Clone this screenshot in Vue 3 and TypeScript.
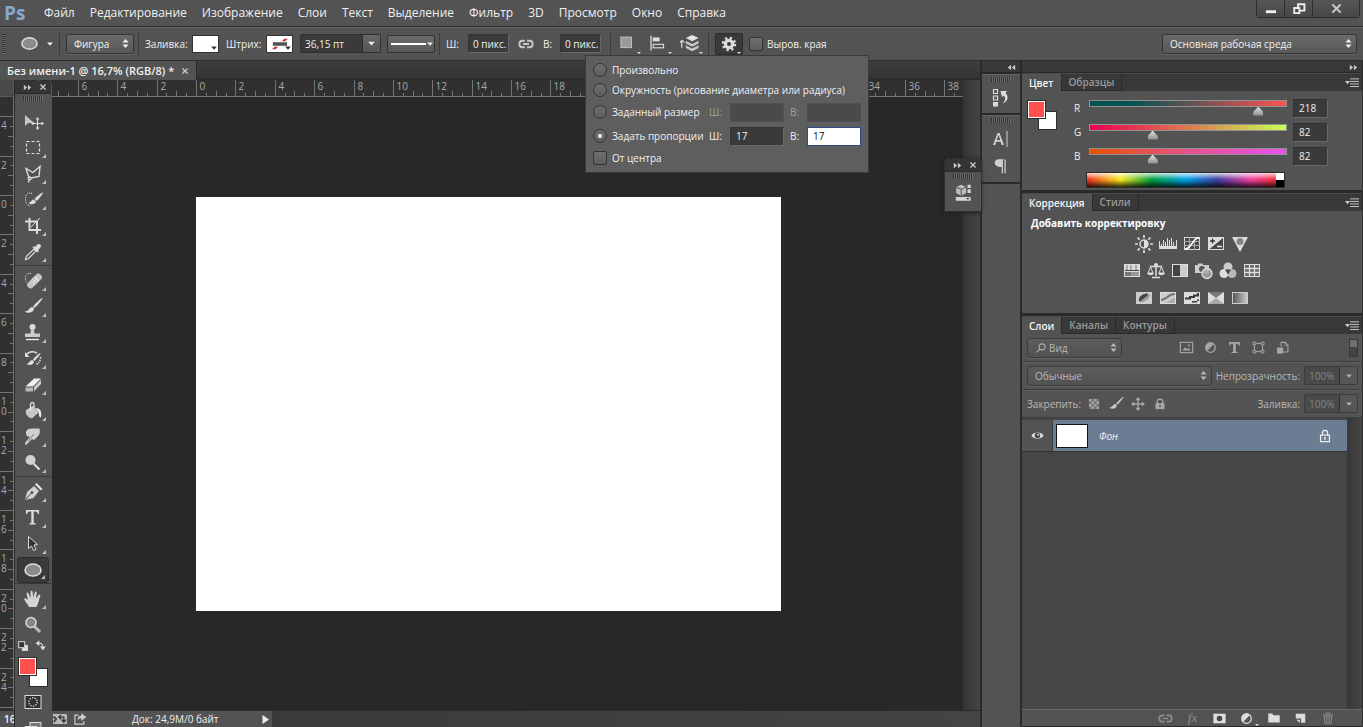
<script setup lang="ts">
import { h, ref } from 'vue'

const glyphs: Record<string, string> = {
  move: `<path d="M3 4v11l3-3h6z" fill="#c8c8c8"/><path d="M15.500 8v9M11 12.500h9" fill="none" stroke="#dcdcdc"/><path d="M15.500 6l2 2.500h-4zM15.500 19l2-2.500h-4zM9 12.500l2.500-2v4zM22 12.500l-2.500-2v4z" fill="#dcdcdc"/>`,
  marquee: `<rect x="4.500" y="4.500" width="13" height="12" fill="none" stroke="#e6e6e6" stroke-width="1.200" stroke-dasharray="3 2"/>`,
  lasso: `<path d="M7 15L4 5.500l7 4 7-6-1 10-8 1.500c-1.500-2-3.500-.5-2.500 1s3 .5 2.500-1M7.500 16l-1 3.500" fill="none" stroke="#dcdcdc" stroke-width="1.400"/>`,
  quick: `<path d="M10 4.500C5 2.500 3.500 6 3.500 10s1.500 7 5 6.500" fill="none" stroke="#eee" stroke-dasharray="1 1.200"/><path d="M20.500 3.500c-2 1-6 4-8 6.500l2 2c2.500-2 5.500-6 6.500-8z" fill="#dcdcdc"/><path d="M11.500 10.500c-2 0-2 2.500-5 3.500 2.500 2 7 1.500 7.500-1.500z" fill="#dcdcdc"/>`,
  crop: `<path d="M7.500 3v12H19M3 6.500h12V19" fill="none" stroke="#dcdcdc" stroke-width="2"/><path d="M18 3l-9 9" stroke="#dcdcdc"/>`,
  dropper: `<path d="M12 8l2 2-7.500 7.500-3 1 .8-3z" fill="none" stroke="#dcdcdc" stroke-width="1.200"/><path d="M10.500 6.500l5 5 1.500-1.500-1-1c1-1 3-2.500 3-4s-2-2.500-3.500-1.500L13 6l-1-1z" fill="#dcdcdc"/>`,
  heal: `<path d="M9 3.500c-4-.5-6 2-5.500 5.500.5 2 .5 3 1 4" fill="none" stroke="#eee" stroke-dasharray="1 1.200"/><rect x="3.500" y="7.500" width="18" height="7" rx="3.500" transform="rotate(-45 12.500 11)" fill="#c4c4c4"/><path d="M9 10.500l4-4 4 4-4.500 4.500z" fill="#e6e6e6"/><path d="M12 9h1M14 11h1M10.500 11h1M12.500 13h1" stroke="#555"/>`,
  brush: `<path d="M20 2c-2.500 1.500-7 6-9 8.500l1.500 1.500C15 10 19 5 20.500 2.500z" fill="#dcdcdc"/><path d="M10.500 11c-3-.5-3 4-8 4.500 3.500 2.500 9 1.500 9.500-3z" fill="#dcdcdc"/>`,
  stamp: `<circle cx="10.500" cy="5" r="3" fill="#dcdcdc"/><path d="M9 7h3l.5 4.500h5.500V15H3v-3.500h5.500z" fill="#ccc"/><path d="M4 17.500h13" stroke="#eee" stroke-width="1.300"/>`,
  history: `<path d="M4 7c3-4 7-4 11-2" fill="none" stroke="#dcdcdc" stroke-width="1.500"/><path d="M3 4v5h4.500z" fill="#dcdcdc"/><path d="M18 5c-2 1-5 4-7 6.500l1.500 1.500c2-2 5-5.500 6-7.500z" fill="#dcdcdc"/><path d="M10.500 12c-3 0-2.500 3-6 4 3 2 7.500 1 7.500-2.500z" fill="#dcdcdc"/><path d="M18.500 9c0 4-1.500 6-5 8" fill="none" stroke="#eee" stroke-width="1.500" stroke-dasharray="1.500 1"/>`,
  eraser: `<path d="M3.500 12.500L12 4.500h7l-8 8z" fill="#ededed"/><path d="M3.500 13.500h7.500v4H3.500z" fill="#b8b8b8"/><path d="M12 13l7-7.500V10l-7 7.500z" fill="#c8c8c8"/>`,
  bucket: `<path d="M4 10l7-4 5.500 6.500-6 5.500c-3 1.500-8-4-6.500-8z" fill="#c8c8c8"/><path d="M8.500 11V5c0-3.500 3.500-3.500 3.500 0v3" fill="none" stroke="#e6e6e6" stroke-width="1.300"/><path d="M13 8c5 0 7 3 6 9-2 1-2-2-2.500-5z" fill="#eee"/>`,
  smudge: `<path d="M4 6c1-3 3-3.500 7-3.500h6.500c1 4 0 7-3.500 9.500-1 2-3 2-4 1L4 19c-2-1-.5-3 1-4.500l3-4C5 11.500 3.500 9 4 6z" fill="#d0d0d0"/><path d="M12 8l-6 7" stroke="#777"/>`,
  dodge: `<circle cx="8.500" cy="8" r="5" fill="#d0d0d0"/><path d="M11.500 11.500l6 6" stroke="#dcdcdc" stroke-width="2.200"/>`,
  pen: `<path d="M3 19l2-8 7-6 5 5-5.500 7z" fill="#d0d0d0"/><path d="M13 3.500l1.500-1.500 6 6L19 9.500z" fill="#e6e6e6"/><path d="M3.500 18.500l6-6.500" stroke="#444"/><circle cx="10" cy="11.500" r="1.300" fill="#444"/>`,
  text: `<path d="M4 3h13v4h-1.300c-.2-1.800-.8-2.500-2.500-2.500h-1.500v10.500c0 1 .6 1.300 2 1.400v1H7.300v-1c1.400-.1 2-.4 2-1.400V4.500H7.800C6 4.500 5.500 5.200 5.300 7H4z" fill="#dcdcdc"/>`,
  select: `<path d="M6.500 3.500v12l3-2.500 2 4.500 2.500-1-2-4.500 3.500-.5z" fill="#303030" stroke="#dcdcdc"/>`,
  ellipse: `<ellipse cx="11" cy="11" rx="8" ry="6" fill="#8b8b8b" stroke="#e0e0e0" stroke-width="1.500"/>`,
  hand: `<path d="M7 19c-1-3-4-5-5-8 1-1.500 2.500-.5 4 1L4.500 5.500c0-1.500 1.800-1.500 2 0L8.500 10 8.500 4c0-1.700 2-1.700 2.200 0l.5 5.500 1.500-5c.5-1.500 2.300-1 2 .5l-.8 5.500L16.500 7c1-1.300 2.300-.2 1.800 1-1.300 3-1.800 8-4 11z" fill="#d4d4d4"/>`,
  zoom: `<path d="M12 12l6 6" stroke="#bdbdbd" stroke-width="3"/><circle cx="9" cy="8.500" r="5" fill="#858585" stroke="#dcdcdc" stroke-width="1.500"/>`,
  mask: `<rect x="3" y="4.500" width="16" height="13" fill="#333" stroke="#dcdcdc"/><circle cx="11" cy="11" r="4.200" fill="none" stroke="#eee" stroke-width="1.200" stroke-dasharray="1.300 1.300"/>`,
  screen: `<rect x="8" y="5.500" width="11" height="8" fill="#777" stroke="#dcdcdc"/><path d="M3 9.500h12V15H3z" fill="#999" stroke="#dcdcdc"/>`,
  reset: `<rect x="9" y="9" width="11" height="11" fill="#ddd"/><rect x="3" y="3" width="11" height="11" fill="#333" stroke="#ccc" stroke-width="2"/>`,
  swap: `<path d="M5 6.500c7-1.500 9 1 9.500 7" fill="none" stroke="#dcdcdc" stroke-width="2"/><path d="M8 1v10L1 6zM9 12h11l-5.500 7z" fill="#dcdcdc"/>`,
  link: `<path d="M9.500 6.500H6c-5.500 0-5.500 9 0 9h3.500M12.500 6.500H16c5.500 0 5.500 9 0 9h-3.500M7 11h8" fill="none" stroke="currentColor" stroke-width="2.500"/>`,
  combine: `<rect x="3.500" y="2.500" width="13" height="13" fill="#9a9a9a" stroke="#d0d0d0"/>`,
  align: `<path d="M3.500 2v17" stroke="#ddd" stroke-width="1.500"/><rect x="5.500" y="4" width="8" height="4.500" fill="#ddd"/><rect x="6" y="12" width="12" height="4" fill="#555" stroke="#ddd" stroke-width="1.300"/>`,
  stack: `<path d="M3 7v8M1 9.500L3.500 7 6 9.500" fill="none" stroke="#ddd" stroke-width="1.300"/><path d="M14.500 1l7 3.500-7 3.500-7-3.500z" fill="#e4e4e4"/><path d="M7.500 7.500l7 3.500 7-3.500v3l-7 3.500-7-3.500zM7.500 12.500l7 3.500 7-3.500v3L14.500 19l-7-3.500z" fill="#c8c8c8"/>`,
  gear: `<circle cx="11" cy="11" r="5" fill="none" stroke="#dcdcdc" stroke-width="4.500"/><circle cx="11" cy="11" r="8" fill="none" stroke="#dcdcdc" stroke-width="4" stroke-dasharray="3 3.283"/>`,
  historyPanel: `<path d="M3.500 2.500h4v4h-4zM3.500 9h4v4h-4z" fill="none" stroke="#dcdcdc" stroke-width="1.200"/><path d="M3 15h5v4.500H3z" fill="#dcdcdc"/><path d="M10.500 4H17l-1.500 2c4 4 2 9-3.500 11 3.500-3 4-6 1.800-8.500L12 10z" fill="#dcdcdc"/>`,
  glyphPanel: `<path d="M3 17L7.500 5h2L14 17h-2.400l-1-3.200H6.300L5.200 17zm3.800-5h3.400L8.500 6.800z" fill="#d0d0d0" fill-rule="evenodd"/><path d="M17 3v16" stroke="#d0d0d0"/>`,
  para: `<path d="M15.500 4v15M12.500 4v15" stroke="#d0d0d0" stroke-width="1.400"/><path d="M16 3.500H8c-6 1-5 8 2 8.500h2V4.500z" fill="#d0d0d0"/>`,
  cube: `<path d="M9 2l5.500 2.500v6.500L9 14l-5.500-3V4.500z" fill="#bdbdbd"/><path d="M3.500 4.500L9 7l5.500-2.500M9 7v7" fill="none" stroke="#444"/><path d="M16 2h3.500v3.500H16zM16 7h3.500v4H16zM3 15.500h16.500v4H3z" fill="#d4d4d4"/><path d="M14.500 16.500h3.500l-1.700 2z" fill="#333"/>`,
  sun: `<circle cx="11" cy="11" r="4" fill="#555" stroke="#ddd" stroke-width="1.500"/><path d="M11 7a4 4 0 010 8z" fill="#ddd"/><path d="M11 2v3M11 17v3M2 11h3M17 11h3M4.600 4.600l2.100 2.100M15.300 15.300l2.100 2.100M4.600 17.400l2.100-2.100M15.300 6.700l2.100-2.100" stroke="#ddd" stroke-width="1.700"/>`,
  levels: `<path d="M2 13h18v3H2z" fill="#ddd"/><path d="M2.500 8v6M4.500 11v3M6.500 7v7M8.500 9v5M10.500 5v9M12.500 7v7M14.500 5v9M16.500 9v5M19.500 7v7" stroke="#ddd"/>`,
  curves: `<rect x="3.500" y="4.500" width="15" height="12" fill="#4a4a4a" stroke="#ddd"/><path d="M8.500 4v13M13.500 4v13M3 8.500h16M3 12.500h16" stroke="#aaa"/><path d="M4 16c7 0 7-11 14-11" fill="none" stroke="#fff" stroke-width="1.500"/>`,
  exposure: `<rect x="3.500" y="4.500" width="15" height="12" fill="#444" stroke="#ddd"/><path d="M4 16.500V5h14z" fill="#ddd"/><path d="M5 8h5M7.500 5.500v5" stroke="#333" stroke-width="1.300"/><path d="M12 13.500h5" stroke="#eee" stroke-width="1.500"/>`,
  vibrance: `<path d="M3 4h16l-8 15z" fill="#ddd"/><circle cx="11" cy="8.500" r="3.500" fill="#858585"/>`,
  hue: `<rect x="3" y="4" width="16" height="13" fill="#ddd"/><path d="M4 10.500h14" stroke="#444"/><path d="M6 5v5M10 5v5M15 5v5" stroke="#aaa" stroke-width="2"/><path d="M4 12h14v4H4z" fill="#999"/><path d="M4 12h6v4H4z" fill="#777"/>`,
  balance: `<path d="M11 4v12M5 6.500h12M7 17.500h8" stroke="#ddd" stroke-width="1.500"/><circle cx="11" cy="5" r="2" fill="#ddd"/><path d="M5.500 7L3 13h5zM16.500 7L14 13h5z" fill="none" stroke="#ddd"/><path d="M2 13h7c-1 3-6 3-7 0zM13 13h7c-1 3-6 3-7 0z" fill="#ddd"/>`,
  bw: `<rect x="3.500" y="4.500" width="15" height="12" fill="#444" stroke="#ddd"/><path d="M11 5h7v11h-7z" fill="#ccc"/>`,
  photo: `<path d="M2 5h3V3.500h5V5h6v8H2z" fill="#ccc"/><circle cx="9" cy="9" r="3" fill="#555"/><circle cx="14" cy="13.500" r="5" fill="#aaa" fill-opacity=".8" stroke="#ddd" stroke-width="1.300"/>`,
  mixer: `<circle cx="11" cy="7" r="4.500" fill="#ccc"/><circle cx="7" cy="13.500" r="4.500" fill="#ddd"/><circle cx="15" cy="13.500" r="4.500" fill="#b8b8b8"/><path d="M8 9.500h6l-3 5z" fill="#444"/>`,
  table: `<rect x="3.500" y="4.500" width="15" height="12" fill="#666" stroke="#ddd"/><path d="M8.500 4v13M13.500 4v13M3 8.500h16M3 12.500h16" stroke="#ddd" stroke-width="1.300"/>`,
  invert: `<rect x="3" y="5" width="16" height="12" fill="#ccc"/><path d="M6 14c-1-5 4-7.500 9-7.500 0 5-3 9-8 8z" fill="#444"/><path d="M5 16L17 6.500c0 5-4 8-9 8z" fill="#999"/>`,
  poster: `<rect x="3.500" y="5.500" width="15" height="11" fill="#ccc" stroke="#ddd"/><path d="M4 12c5-1 7-5 12-6h2v2c-6 0-8 6-14 6z" fill="#777"/><path d="M8 16c4 0 6-5 10-5v5z" fill="#aaa"/>`,
  threshold: `<rect x="3" y="5" width="16" height="12" fill="#ddd"/><path d="M4 10.500h4V9h4V7.500h4V6h2v3.500h-4V11h-4v1.500H4zM7 15.500h4V14h5v-1.500h2V14h-2v1.500z" fill="#3a3a3a"/>`,
  selective: `<rect x="3" y="5" width="16" height="12" fill="#a8a8a8"/><path d="M3 5h16l-8 6z" fill="#777"/><path d="M3 5l8 6-8 6zM19 5l-8 6 8 6z" fill="#ddd"/>`,
  gradmap: `<defs><linearGradient id="gm"><stop stop-color="#555"/><stop offset="1" stop-color="#ccc"/></linearGradient></defs><rect x="3.500" y="5.500" width="15" height="11" fill="url(#gm)" stroke="#ccc"/>`,
  picture: `<rect x="2" y="3.500" width="18" height="15" fill="none" stroke="#a5a5a5" stroke-width="1.700"/><path d="M5 15.500l4-5 3 3 2-2 3 4z" fill="#a5a5a5"/><circle cx="14.500" cy="8" r="1.500" fill="#a5a5a5"/>`,
  half: `<circle cx="11" cy="11" r="7" fill="currentColor"/><path d="M16 6a7 7 0 01-10 10z" fill="#555"/><circle cx="11" cy="11" r="7" fill="none" stroke="currentColor" stroke-width="1.800"/>`,
  textGray: `<path d="M3 3h16v5h-1.700c-.2-1.800-.8-2.500-2.500-2.500H13v10.500c0 1.200.8 1.500 2.400 1.600v1.600H6.600v-1.600C8.200 17.500 9 17.200 9 16V5.500H7.200C5.400 5.500 4.900 6.200 4.700 8H3z" fill="#a5a5a5"/>`,
  shape: `<rect x="5" y="5" width="12" height="12" fill="none" stroke="#a5a5a5" stroke-width="1.500"/><path d="M3 3h4v4H3zM15 3h4v4h-4zM3 15h4v4H3zM15 15h4v4h-4z" fill="#555" stroke="#a5a5a5" stroke-width="1.400"/>`,
  smart: `<path d="M9 10V3.500h6l4 4v10h-7" fill="none" stroke="#a5a5a5" stroke-width="1.600"/><path d="M14.500 3v5H19" fill="none" stroke="#a5a5a5"/><path d="M3 11h9v9H3z" fill="#a5a5a5"/>`,
  checker: `<rect x="3" y="3" width="16" height="16" fill="#777"/><path d="M3 3h4v4H3zM11 3h4v4h-4zM7 7h4v4H7zM15 7h4v4h-4zM3 11h4v4H3zM11 11h4v4h-4zM7 15h4v4H7zM15 15h4v4h-4z" fill="#b4b4b4"/>`,
  cross: `<path d="M11 3v16M3 11h16" stroke="#b8b8b8" stroke-width="2"/><path d="M11 0l4 5H7zM11 22l4-5H7zM0 11l5-4v8zM22 11l-5-4v8z" fill="#b8b8b8"/>`,
  lock: `<path d="M6.500 10V7c0-5 9-5 9 0v3" fill="none" stroke="currentColor" stroke-width="2"/><path d="M4 9.500h14V19H4z" fill="currentColor"/><path d="M11 12v4" stroke="#444" stroke-width="2"/>`,
  layerLock: `<path d="M7 9V6c0-5 8-5 8 0v3M4 9.500h14V20H4z" fill="none" stroke="#eee" stroke-width="2"/><path d="M11 12.500v4.500" stroke="#eee" stroke-width="2.500"/>`,
  eye: `<path d="M2 11.500C5 5 17 5 20 11.500 17 17 5 17 2 11.500z" fill="#ddd"/><circle cx="11" cy="11" r="4" fill="#444"/><circle cx="12" cy="10" r="1.500" fill="#ddd"/>`,
  maskBtn: `<rect x="2" y="4" width="18" height="14" fill="#ddd"/><circle cx="11" cy="11" r="4" fill="#444"/>`,
  folder: `<path d="M2 4h6l2 2.500h10V18H2z" fill="#ddd"/>`,
  page: `<path d="M3 3h16v15h-7v-7H3z" fill="#ddd"/><path d="M4 13h6v5z" fill="#ddd"/>`,
  trash: `<path d="M3 6h16M8 5.500V3h6v2.500" fill="none" stroke="#8d8d8d" stroke-width="1.500"/><path d="M5 8h12l-1 12H6z" fill="none" stroke="#8d8d8d" stroke-width="1.500"/><path d="M8.500 9v10M11 9v10M13.500 9v10" stroke="#8d8d8d" stroke-width="1.200"/>`,
  search: `<circle cx="13" cy="9" r="5.500" fill="none" stroke="#aaa" stroke-width="2"/><path d="M9 13l-6 6" stroke="#aaa" stroke-width="2.500"/>`,
  updown: `<path d="M11 2l6 7H5zM11 20l6-7H5z" fill="currentColor"/>`,
  down: `<path d="M3 7h16l-8 9z" fill="currentColor"/>`,
  right2: `<path d="M2 4l8 7-8 7zM12 4l8 7-8 7z" fill="#ccc"/>`,
  left2: `<path d="M10 4l-8 7 8 7zM20 4l-8 7 8 7z" fill="#ccc"/>`,
  close: `<path d="M4 4l14 14M18 4L4 18" stroke="#ccc" stroke-width="3.500"/>`,
  burger: `<path d="M0 8h8l-4 5z" fill="#ccc"/><path d="M8 4.500h14M8 8.500h14M8 12.500h14M8 16.500h14" stroke="#ccc" stroke-width="1.500"/>`,
  sync: `<path d="M0 3h20c1 0 2 1 2 2v12c0 1-1 2-2 2H0z" fill="#bbb"/><path d="M10 8h7v6M20.500 12l-3.500 4-3.500-4M13 4.500L9 8l4 3.500" fill="none" stroke="#333" stroke-width="2"/><path d="M1 7l4 4-4 5" fill="none" stroke="#444" stroke-width="3"/>`,
  share: `<path d="M9 5H3v14h14v-5" fill="none" stroke="#ccc" stroke-width="1.800"/><path d="M13 2l8 6-8 6v-4c-3 0-5 2-6 4 0-5 2-8 6-8z" fill="#ccc"/>`,
  play: `<path d="M5 2l13 9-13 9z" fill="#eee"/>`,
  min: `<path d="M3 13h16v4.500H3z" fill="#eee"/>`,
  restore: `<path d="M9.500 3.500h10v10h-10z" fill="none" stroke="#eee" stroke-width="3"/><path d="M3.500 9.500h8v8h-8z" fill="#444" stroke="#eee" stroke-width="3"/>`,
}

const Ico = (p: { n: string; s?: number }) =>
  h('svg', { viewBox: '0 0 22 22', width: p.s ?? 22, height: p.s ?? 22, 'aria-hidden': 'true', style: { display: 'block', flex: 'none' }, innerHTML: glyphs[p.n] })
Ico.props = ['n', 's']

const menus = ['Файл', 'Редактирование', 'Изображение', 'Слои', 'Текст', 'Выделение', 'Фильтр', '3D', 'Просмотр', 'Окно', 'Справка']

const toolGroups = [
  ['move', 'marquee', 'lasso', 'quick', 'crop', 'dropper'],
  ['heal', 'brush', 'stamp', 'history', 'eraser', 'bucket', 'smudge', 'dodge'],
  ['pen', 'text', 'select', 'ellipse'],
  ['hand', 'zoom'],
]
const noFlyout = ['move', 'zoom']
const activeTool = ref('ellipse')

const channels = ref([
  { key: 'R', value: 218 },
  { key: 'G', value: 82 },
  { key: 'B', value: 82 },
])

const adjustments = [
  ['sun', 'levels', 'curves', 'exposure', 'vibrance'],
  ['hue', 'balance', 'bw', 'photo', 'mixer', 'table'],
  ['invert', 'poster', 'threshold', 'selective', 'gradmap'],
]

const mode = ref('ratio')
const ratioW = ref('17')
const ratioH = ref('17')

// Screen pixels per ruler unit at 16.7% zoom.
const unit = 19.69
function ticks(origin: number, from: number, to: number, labelled: (v: number) => boolean) {
  const out: { pos: number; kind: number; label: string }[] = []
  for (let i = from * 2; i <= to * 2; i++) {
    const kind = i % 4 === 0 ? 2 : i % 2 === 0 ? 1 : 0
    const v = i / 2
    out.push({ pos: Math.round(origin + v * unit) + 0.5, kind, label: kind === 2 && labelled(v) ? String(Math.abs(v)) : '' })
  }
  return out
}
// No labels where the toolbox or the options menu lies over the ruler.
const hTicks = ticks(182, -8, 38.5, v => v >= -6 && (v < 20 || v > 32))
const vTicks = ticks(98, -4, 26, v => v >= -4 && v < 26)
</script>

<template>
  <div class="app">
    <header class="menubar">
      <span class="logo">Ps</span>
      <nav class="menus">
        <button v-for="m in menus" :key="m" type="button">{{ m }}</button>
      </nav>
      <div class="winctl">
        <button type="button" aria-label="Свернуть"><Ico n="min" :s="14" /></button>
        <button type="button" aria-label="Восстановить"><Ico n="restore" :s="14" /></button>
        <button type="button" class="wide" aria-label="Закрыть"><Ico n="close" :s="13" /></button>
      </div>
    </header>

    <section class="options">
      <span class="vgrip"></span>
      <button type="button" class="plain preset" aria-label="Инструмент"><Ico n="ellipse" :s="21" /><Ico n="down" :s="8" /></button>
      <i class="sep"></i>
      <span class="sel mode-sel">
        <select aria-label="Режим"><option>Фигура</option></select><Ico n="updown" :s="11" />
      </span>
      <i class="sep tight"></i>
      <span class="lbl l-fill">Заливка:</span>
      <button type="button" class="swatch" aria-label="Заливка"><Ico n="down" :s="8" /></button>
      <span class="lbl l-stroke">Штрих:</span>
      <button type="button" class="swatch none" aria-label="Штрих">
        <svg class="slash" viewBox="0 0 27 18" width="25" height="16"><path d="M6 7h16v4H6z" fill="#555" /><path d="M5 15l3-3h4l-3 3zM16 6l3-3h4l-3 3z" fill="#c33" /></svg>
        <Ico n="down" :s="8" />
      </button>
      <span class="combo size"><input aria-label="Толщина" value="36,15 пт" /><button type="button" aria-label="Выбрать толщину"><Ico n="down" :s="9" /></button></span>
      <button type="button" class="line" aria-label="Тип линии"><i></i><Ico n="down" :s="8" /></button>
      <i class="sep tight"></i>
      <label class="lbl l-w" for="ow">Ш:</label>
      <input id="ow" class="box px" value="0 пикс." />
      <button type="button" class="plain chain" aria-label="Связать"><Ico n="link" :s="16" /></button>
      <label class="lbl l-h" for="oh">В:</label>
      <input id="oh" class="box px" value="0 пикс." />
      <i class="sep wide"></i>
      <button type="button" class="plain op fly" aria-label="Операции с контуром"><Ico n="combine" :s="18" /></button>
      <button type="button" class="plain op fly" aria-label="Выравнивание"><Ico n="align" :s="19" /></button>
      <button type="button" class="plain op fly" aria-label="Порядок"><Ico n="stack" :s="20" /></button>
      <i class="sep tight"></i>
      <button type="button" class="gear fly" aria-label="Параметры"><Ico n="gear" :s="16" /></button>
      <label class="check"><input type="checkbox" />Выров. края</label>
      <span class="grow"></span>
      <span class="sel workspace">
        <select aria-label="Рабочая среда"><option>Основная рабочая среда</option></select><Ico n="updown" :s="11" />
      </span>

      <form class="popup" @submit.prevent>
        <label class="prow"><input v-model="mode" type="radio" name="mode" value="free" />Произвольно</label>
        <label class="prow"><input v-model="mode" type="radio" name="mode" value="circle" />Окружность (рисование диаметра или радиуса)</label>
        <div class="prow tall off">
          <label class="opt"><input v-model="mode" type="radio" name="mode" value="size" />Заданный размер</label>
          <label class="pw" for="sw">Ш:</label><input id="sw" class="box" disabled />
          <label class="ph" for="sh">В:</label><input id="sh" class="box" disabled />
        </div>
        <div class="prow tall">
          <label class="opt"><input v-model="mode" type="radio" name="mode" value="ratio" />Задать пропорции</label>
          <label class="pw" for="rw">Ш:</label><input id="rw" v-model="ratioW" class="box" />
          <label class="ph" for="rh">В:</label><input id="rh" v-model="ratioH" class="box active" />
        </div>
        <label class="prow"><input type="checkbox" />От центра</label>
      </form>
    </section>

    <main class="work">
      <section class="doc">
        <div class="doctabs">
          <div class="doctab"><span>Без имени-1 @ 16,7% (RGB/8) *</span><button type="button" class="plain" aria-label="Закрыть документ"><Ico n="close" :s="8" /></button></div>
        </div>
        <div class="stage">
          <div class="corner"></div>
          <svg class="hruler" width="100%" height="17">
            <g v-for="t in hTicks" :key="t.pos">
              <line :x1="t.pos" :x2="t.pos" :y1="t.kind === 2 ? 0 : t.kind === 1 ? 11 : 13" y2="17" />
              <text v-if="t.label" :x="t.pos + 3" y="10">{{ t.label }}</text>
            </g>
            <line x1="0" x2="100%" y1="16.500" y2="16.500" />
          </svg>
          <div class="vscroll"></div>
          <svg class="vruler" width="14" height="100%">
            <g v-for="t in vTicks" :key="t.pos">
              <line :y1="t.pos" :y2="t.pos" :x1="t.kind === 2 ? 0 : t.kind === 1 ? 8 : 10" x2="14" />
              <text v-for="(c, k) in t.label.split('')" :key="k" x="1" :y="t.pos + 12 + k * 10">{{ c }}</text>
            </g>
            <line x1="13.500" x2="13.500" y1="0" y2="100%" />
          </svg>
          <div class="canvas"><div class="page"></div></div>
        </div>
        <footer class="status">
          <span class="zoomval">16</span>
          <Ico n="sync" :s="14" />
          <Ico n="share" :s="14" />
          <span class="docinfo">Док: 24,9M/0 байт</span>
          <button type="button" class="plain" aria-label="Сведения"><Ico n="play" :s="11" /></button>
        </footer>

        <aside class="toolbox">
          <div class="floathead"><Ico n="right2" :s="9" /><Ico n="close" :s="8" /></div>
          <i class="grip"></i>
          <div class="tools">
            <div v-for="(g, gi) in toolGroups" :key="gi" class="group">
              <button v-for="t in g" :key="t" type="button" :aria-label="t" :class="['tool', { on: t === activeTool, corner3: !noFlyout.includes(t) }]" @click="activeTool = t"><Ico :n="t" /></button>
            </div>
          </div>
          <div class="mini"><Ico n="reset" :s="12" /><Ico n="swap" :s="12" /></div>
          <div class="fgbg"><button type="button" class="bg" aria-label="Цвет фона"></button><button type="button" class="fg" aria-label="Основной цвет"></button></div>
          <button type="button" class="tool" aria-label="Быстрая маска"><Ico n="mask" /></button>
          <button type="button" class="tool" aria-label="Режим экрана"><Ico n="screen" /></button>
        </aside>

        <aside class="floatpanel">
          <div class="floathead"><Ico n="right2" :s="9" /><Ico n="close" :s="8" /></div>
          <i class="grip"></i>
          <button type="button" class="plain" aria-label="Свойства"><Ico n="cube" :s="20" /></button>
        </aside>
      </section>

      <aside class="strip">
        <div class="striphead"><Ico n="left2" :s="9" /></div>
        <div class="stripsec"><i class="grip"></i><button type="button" class="plain" aria-label="История"><Ico n="historyPanel" /></button></div>
        <div class="stripsec"><i class="grip"></i><button type="button" class="plain" aria-label="Символ"><Ico n="glyphPanel" /></button><button type="button" class="plain" aria-label="Абзац"><Ico n="para" :s="20" /></button></div>
        <div class="striprest"></div>
      </aside>

      <aside class="panels">
        <div class="striphead"><Ico n="right2" :s="9" /></div>

        <section class="panel color">
          <div class="tabs"><button type="button" class="on">Цвет</button><button type="button">Образцы</button><Ico n="burger" :s="14" /></div>
          <div class="colorbody">
            <div class="fgbg"><button type="button" class="bg" aria-label="Цвет фона"></button><button type="button" class="fg" aria-label="Основной цвет"></button></div>
            <div class="sliders">
              <div v-for="c in channels" :key="c.key" class="chan">
                <label :for="'c' + c.key">{{ c.key }}</label>
                <input :id="'c' + c.key" v-model.number="c.value" type="range" min="0" max="255" :class="c.key" />
                <input v-model.number="c.value" class="box" :aria-label="c.key + ' значение'" />
              </div>
              <div class="spectrum"><i></i></div>
            </div>
          </div>
        </section>

        <section class="panel adjust">
          <div class="tabs"><button type="button" class="on">Коррекция</button><button type="button">Стили</button><Ico n="burger" :s="14" /></div>
          <h3>Добавить корректировку</h3>
          <div v-for="(r, i) in adjustments" :key="i" class="adjrow">
            <button v-for="a in r" :key="a" type="button" class="plain" :aria-label="a"><Ico :n="a" /></button>
          </div>
        </section>

        <section class="panel layers">
          <div class="tabs"><button type="button" class="on">Слои</button><button type="button">Каналы</button><button type="button">Контуры</button><Ico n="burger" :s="14" /></div>
          <div class="lrow">
            <span class="sel kind"><Ico n="search" :s="12" /><select aria-label="Фильтр слоев"><option>Вид</option></select><Ico n="updown" :s="11" /></span>
            <span class="filters">
              <button v-for="f in ['picture', 'half', 'textGray', 'shape', 'smart']" :key="f" type="button" class="plain" :aria-label="f"><Ico :n="f" :s="15" /></button>
            </span>
            <button type="button" class="switch" aria-label="Включить фильтр"></button>
          </div>
          <div class="lrow">
            <span class="sel blend"><select aria-label="Режим наложения"><option>Обычные</option></select><Ico n="updown" :s="11" /></span>
            <label for="opac" class="right">Непрозрачность:</label>
            <span class="combo pct"><input id="opac" value="100%" disabled /><button type="button" aria-label="Непрозрачность"><Ico n="down" :s="8" /></button></span>
          </div>
          <div class="lrow">
            <span class="locklbl">Закрепить:</span>
            <span class="locks">
              <button v-for="f in ['checker', 'brush', 'cross', 'lock']" :key="f" type="button" class="plain" :aria-label="f"><Ico :n="f" :s="f === 'brush' ? 18 : 14" /></button>
            </span>
            <label for="fillp" class="right">Заливка:</label>
            <span class="combo pct"><input id="fillp" value="100%" disabled /><button type="button" aria-label="Заливка"><Ico n="down" :s="8" /></button></span>
          </div>
          <div class="list">
            <div class="layer">
              <button type="button" class="vis" aria-label="Видимость"><Ico n="eye" :s="15" /></button>
              <span class="thumb"></span><span class="lname">Фон</span><Ico n="layerLock" :s="14" />
            </div>
          </div>
          <footer class="lfoot">
            <button type="button" class="plain dim" aria-label="Связать слои"><Ico n="link" :s="15" /></button>
            <button type="button" class="plain fx">fx</button>
            <button type="button" class="plain" aria-label="Маска"><Ico n="maskBtn" :s="15" /></button>
            <button type="button" class="plain lit fly" aria-label="Корректирующий слой"><Ico n="half" :s="15" /></button>
            <button type="button" class="plain" aria-label="Группа"><Ico n="folder" :s="14" /></button>
            <button type="button" class="plain" aria-label="Новый слой"><Ico n="page" :s="13" /></button>
            <button type="button" class="plain" aria-label="Удалить"><Ico n="trash" :s="14" /></button>
          </footer>
        </section>
      </aside>
    </main>
  </div>
</template>

<style>
html, body { background: #282828; }
body { margin: 0; overflow: hidden; }
</style>

<style scoped>
.app, .app * { box-sizing: border-box; }
.app {
  display: flex; flex-direction: column; height: 100vh; overflow: hidden;
  background: #535353; color: #f0f0f0;
  font: 10px/14px "Open Sans", "Noto Sans", sans-serif;
}
button, input, select { font: inherit; color: inherit; margin: 0; padding: 0; border: 0; border-radius: 0; background: none; outline: 0; min-width: 0; }
button { display: flex; align-items: center; justify-content: center; }
select { appearance: none; width: 100%; height: 100%; }

.menubar { flex: none; display: flex; height: 27px; border-bottom: 1px solid #303030; position: relative; }
.logo { width: 38px; padding-left: 4px; font: 700 19px/26px "Open Sans", sans-serif; color: #86a8d2; }
.menus { display: flex; gap: 15px; padding-left: 6px; font-size: 12px; line-height: 26px; flex: 1; }
.winctl { display: flex; height: 18px; margin-right: 3px; border: 1px solid #2c2c2c; border-top: 0; border-radius: 0 0 4px 4px; }
.winctl button { width: 28px; background: linear-gradient(#555, #484848); border-right: 1px solid #2c2c2c; }
.winctl .wide { width: 46px; border-right: 0; }

.options { flex: none; position: relative; display: flex; align-items: center; height: 34px; border-top: 1px solid #666; padding: 0 6px 2px 2px; }
.options::after { content: ""; position: absolute; left: 0; right: 0; bottom: 0; border-bottom: 1px solid #2c2c2c; }
.vgrip { width: 3px; height: 20px; background: repeating-linear-gradient(#2e2e2e 0 1px, #6a6a6a 1px 2px); }
.preset { margin-left: 14px; gap: 6px; width: 34px; }
.sep { width: 1px; height: 22px; margin: 0 6px 0 6px; background: #3b3b3b; flex: none; }
.sep.tight { margin: 0 6px 0 4px; }
.sep.wide { margin: 0 0 0 9px; }
.sel { display: flex; align-items: center; height: 20px; border: 1px solid #343434; border-radius: 3px; background: linear-gradient(#6a6a6a, #585858); padding: 0 2px 0 7px; box-shadow: 0 1px 0 #646464; }
.mode-sel { width: 68px; }
.workspace { width: 195px; }
.grow { flex: 1; }
.lbl { flex: none; }
.l-fill { width: 47px; }
.l-stroke { width: 47px; padding-left: 7px; }
.l-w { width: 22px; }
.l-h { width: 17px; }
.swatch { position: relative; flex: none; width: 27px; height: 18px; background: #fff; border: 1px solid #333; color: #333; }
.swatch.none { margin-right: 7px; }
.swatch > svg:last-child { position: absolute; right: 0; bottom: 0; }
.combo { display: flex; height: 19px; border: 1px solid #303030; border-radius: 2px; background: #3a3a3a; }
.combo input { flex: 1; padding-left: 4px; }
.combo button { width: 18px; background: linear-gradient(#666, #555); border-left: 1px solid #303030; }
.size { width: 81px; margin-right: 6px; }
.line { width: 48px; height: 18px; border: 1px solid #333; border-radius: 2px; background: linear-gradient(#6a6a6a, #585858); }
.line i { flex: 1; height: 2px; margin-left: 3px; background: #fff; }
.box { flex: none; width: 54px; height: 19px; background: #3a3a3a; border: 1px solid #333; border-bottom-color: #686868; border-right-color: #686868; padding-left: 5px; }
.box.px { width: 41px; padding-left: 4px; }
.chain { width: 34px; color: #c8c8c8; }
.fly { position: relative; }
.fly::after { content: ""; position: absolute; right: 1px; bottom: 0; border: 2px solid transparent; border-top-color: #ddd; border-bottom: 0; }
.op { width: 31px; height: 20px; }
.gear { width: 28px; height: 22px; border: 1px solid #2c2c2c; background: #3a3a3a; border-radius: 2px; }
.check { display: flex; align-items: center; gap: 4px; margin-left: 6px; }
input[type="checkbox"], input[type="radio"] { appearance: none; flex: none; width: 14px; height: 14px; border: 1px solid #333; border-radius: 2px; background: linear-gradient(#6e6e6e, #5e5e5e); }
input[type="radio"] { border-radius: 50%; display: grid; place-items: center; }
input[type="radio"]:checked::before { content: ""; width: 4px; height: 4px; border-radius: 50%; background: #f4f4f4; }

.popup { position: absolute; z-index: 10; left: 585px; top: 27px; width: 284px; height: 118px; padding: 4px 7px; background: #5e5e5e; border: 1px solid #3a3a3a; }
.prow { display: flex; align-items: center; gap: 5px; height: 20px; }
.prow.tall { height: 24px; gap: 0; }
.prow .opt { display: flex; align-items: center; gap: 5px; width: 116px; }
.pw { width: 21px; }
.ph { width: 23px; padding-left: 6px; }
.off > label:not(.opt) { color: #a0a0a0; }
.box:disabled { background: #4a4a4a; border-color: #505050; }
.box.active { background: #fff; color: #111; border: 1px solid #2b4a86; }

.work { flex: 1; display: flex; min-height: 0; background: #2a2a2a; gap: 2px; }
.doc { flex: 1; min-width: 0; position: relative; display: flex; flex-direction: column; }
.doctabs { flex: none; height: 19px; background: linear-gradient(#3e3e3e, #333); border-bottom: 1px solid #2a2a2a; }
.doctab { display: flex; align-items: center; justify-content: space-between; width: 197px; height: 19px; padding: 1px 7px 0; background: #535353; border-right: 1px solid #2a2a2a; font-weight: 600; font-size: 11px; }
.stage { flex: 1; min-height: 0; display: grid; grid-template-columns: 14px 1fr 17px; grid-template-rows: 17px 1fr; }
.corner { background: #4a4a4a; border: 1px dotted #666; border-width: 0 1px 1px 0; }
.hruler { display: block; background: #303030; }
.hruler line, .vruler line { stroke: #747474; }
.hruler text, .vruler text { fill: #a8a8a8; font: 10px "Open Sans", sans-serif; }
.vscroll { grid-row: 1 / 3; grid-column: 3; background: linear-gradient(90deg, #343434, #454545); }
.vruler { display: block; background: #303030; grid-row: 2; grid-column: 1; min-height: 0; }
.canvas { display: grid; place-items: center; background: #282828; min-height: 0; }
.page { width: 585px; height: 414px; background: #fff; }
.status { flex: none; display: flex; align-items: center; height: 17px; background: linear-gradient(90deg, #535353 272px, #3a3a3a 272px, #444); border-top: 1px solid #2c2c2c; }
.zoomval { width: 53px; padding-left: 4px; font-weight: 600; }
.status > svg + svg { margin-left: 6px; }
.docinfo { margin-left: 45px; width: 128px; }

.floathead { display: flex; align-items: center; justify-content: space-between; height: 13px; padding: 0 4px 0 8px; background: #353535; border-radius: 4px 4px 0 0; border-bottom: 1px solid #2a2a2a; }
.grip { display: block; flex: none; width: 20px; height: 5px; margin: 2px auto 0; background: repeating-linear-gradient(90deg, #333 0 1px, #6c6c6c 1px 2px); }
.toolbox { position: absolute; left: 14px; top: 20px; bottom: 0; width: 38px; overflow: hidden; padding-right: 1px; background: #535353; border-left: 1px solid #2a2a2a; border-radius: 4px 4px 0 0; }
.tools { padding-top: 8px; }
.group + .group { border-top: 1px solid #383838; padding-top: 2px; }
.tool { position: relative; width: 32px; height: 26px; margin: 0 auto; }
.tool.on { background: #3a3a3a; border: 1px solid #2e2e2e; border-radius: 3px; }
.corner3::after { content: ""; position: absolute; right: 3px; bottom: 3px; border-left: 4px solid transparent; border-bottom: 4px solid #c0c0c0; }
.mini { display: flex; justify-content: space-between; padding: 2px 4px 0 2px; height: 17px; }
.fgbg { position: relative; width: 30px; height: 30px; margin: 2px 0 2px 3px; }
.fgbg button { position: absolute; width: 19px; height: 19px; border: 1px solid #2c2c2c; }
.fg { left: 0; top: 0; background: #ff5050; box-shadow: inset 0 0 0 1px #fff; }
.bg { right: 0; bottom: 0; background: #fff; }
.floatpanel { position: absolute; z-index: 5; right: 0; top: 97px; margin-right: -2px; width: 38px; height: 54px; background: #535353; border: 1px solid #2e2e2e; border-radius: 4px 4px 0 0; box-shadow: -1px 1px 4px #222; }
.floatpanel .plain { margin: 4px auto 0; }

.strip { width: 38px; display: flex; flex-direction: column; gap: 2px; }
.striphead { height: 11px; flex: none; display: flex; align-items: center; justify-content: flex-end; padding: 2px 4px 0 0; background: #383838; }
.stripsec { background: #535353; border-top: 1px solid #646464; padding-bottom: 2px; }
.stripsec .plain { width: 100%; height: 28px; }
.stripsec .grip + .plain { height: 29px; padding-top: 2px; }
.striprest { flex: 1; background: #535353; }

.panels { width: 341px; display: flex; flex-direction: column; gap: 3px; border-right: 1px solid #2c2c2c; }
.panels .striphead { margin-bottom: -2px; }
.panel { background: #535353; }
.tabs { display: flex; align-items: stretch; height: 18px; background: #383838; border-top: 1px solid #4a4a4a; color: #9a9a9a; font-weight: 600; }
.tabs button { padding: 0 7px; border-right: 1px solid #2a2a2a; border-bottom: 1px solid #2a2a2a; }
.tabs .on { background: #535353; color: #f4f4f4; border-bottom: 0; }
.tabs > svg { margin: 2px 3px 0 auto; }
.color { height: 117px; }
.colorbody { display: flex; padding-top: 5px; }
.colorbody .fgbg { margin: 4px 0 0 5px; }
.sliders { margin-left: 17px; }
.chan { display: flex; align-items: center; height: 24px; }
.chan label { width: 8px; margin-right: 2px; }
.chan .box { width: 35px; margin-left: 1px; }
.chan input[type="range"] { appearance: none; width: 208px; height: 18px; }
.chan input::-webkit-slider-runnable-track { height: 17px; background: var(--g) center 1px / calc(100% - 12px) 5px no-repeat, linear-gradient(#929292, #929292) center 0 / calc(100% - 10px) 7px no-repeat; }
.chan input::-webkit-slider-thumb { appearance: none; width: 10px; height: 9px; margin-top: 7px; background: linear-gradient(#e0e0e0, #8c8c8c); clip-path: polygon(50% 0, 100% 60%, 100% 100%, 0 100%, 0 60%); }
.R { --g: linear-gradient(90deg, #005252 20%, #ff5252); }
.G { --g: linear-gradient(90deg, #ea0052, #dd7a52 50%, #c8ff52); }
.B { --g: linear-gradient(90deg, #e65200, #e6528c 50%, #e652f0); }
.spectrum { display: flex; justify-content: flex-end; width: 199px; height: 16px; margin: 4px 0 0 12px; border: 1px solid #2c2c2c; background: linear-gradient(#fffc, #fff0 45%, #0000 50%, #000c), linear-gradient(90deg, #f03020, #f8e820 17%, #00a040 33%, #00a0e8 50%, #4040a0 66%, #f040a0 83%, #f03030 97%); }
.spectrum i { width: 8px; background: linear-gradient(#fff 50%, #000 50%); }
.adjust { height: 120px; }
h3 { margin: 5px 0 3px 9px; font: 700 10px/14px "Open Sans", sans-serif; color: #fff; }
.adjrow { display: flex; justify-content: center; height: 27px; }
.adjrow button { width: 24px; height: 22px; }

.layers { flex: 1; display: flex; flex-direction: column; min-height: 0; color: #b8b8b8; margin-bottom: 1px; }
.layers .tabs { flex: none; }
.lrow { flex: none; display: flex; align-items: center; height: 28px; padding: 0 4px 0 5px; border-bottom: 1px solid #3c3c3c; box-shadow: 0 1px 0 #606060; }
.layers .sel { background: linear-gradient(#5c5c5c, #525252); border-color: #3c3c3c; }
.kind { width: 95px; gap: 2px; }
.blend { width: 185px; }
.filters { display: flex; margin-left: 52px; color: #a5a5a5; }
.filters button { width: 24px; }
.switch { width: 9px; height: 18px; margin-left: auto; border: 1px solid #383838; background: linear-gradient(#707070 45%, #444 45%); }
.right { margin-left: auto; margin-right: 4px; }
.pct { width: 54px; background: #4a4a4a; border-color: #3c3c3c; color: #858585; }
.pct button { color: #b0b0b0; background: #565656; }
.locklbl { width: 54px; }
.locks { display: flex; margin-left: 2px; opacity: .85; }
.locks button { width: 22px; }
.list { flex: 1; min-height: 0; padding-top: 1px; background: linear-gradient(90deg, #464646 calc(100% - 15px), #383838 calc(100% - 15px), #444); }
.layer { display: flex; align-items: center; height: 32px; margin: 1px 15px 0 0; background: #6b7d93; color: #f0f0f0; border-bottom: 1px solid #333; padding-right: 15px; }
.vis { width: 31px; height: 31px; background: #535353; border-right: 1px solid #3c3c3c; }
.thumb { width: 32px; height: 24px; margin: 0 11px 0 3px; background: #fff; border: 1px solid #111; }
.lname { flex: 1; font-style: italic; }
.lfoot { flex: none; display: flex; justify-content: flex-end; height: 17px; padding-right: 21px; border-top: 1px solid #666; }
.lfoot button { width: 27px; }
.lit { color: #ddd; }
.dim, .fx { color: #8d8d8d; }
.fx { font: italic 13px/14px "Liberation Serif", serif; }
</style>
